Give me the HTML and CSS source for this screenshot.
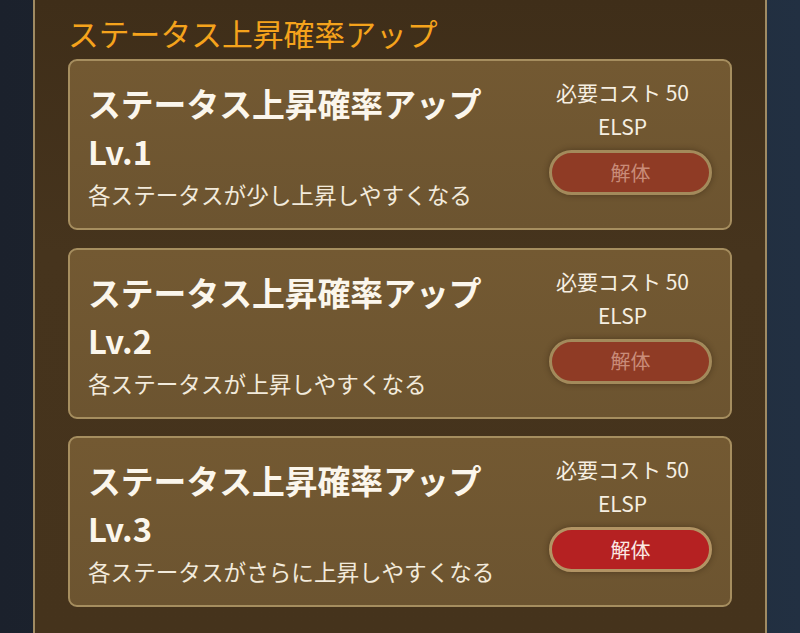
FILE: index.html
```html
<!DOCTYPE html>
<html lang="ja">
<head>
<meta charset="utf-8">
<link rel="stylesheet" href="styles.css">
</head>
<body>
<div class="screen">
  <div class="panel">
    <h2 class="section-title">ステータス上昇確率アップ</h2>
    <div class="card">
      <div class="info">
        <div class="name">ステータス上昇確率アップ Lv.1</div>
        <div class="desc">各ステータスが少し上昇しやすくなる</div>
      </div>
      <div class="side">
        <div class="cost">必要コスト 50 ELSP</div>
        <button class="btn disabled">解体</button>
      </div>
    </div>
    <div class="card">
      <div class="info">
        <div class="name">ステータス上昇確率アップ Lv.2</div>
        <div class="desc">各ステータスが上昇しやすくなる</div>
      </div>
      <div class="side">
        <div class="cost">必要コスト 50 ELSP</div>
        <button class="btn disabled">解体</button>
      </div>
    </div>
    <div class="card">
      <div class="info">
        <div class="name">ステータス上昇確率アップ Lv.3</div>
        <div class="desc">各ステータスがさらに上昇しやすくなる</div>
      </div>
      <div class="side">
        <div class="cost">必要コスト 50 ELSP</div>
        <button class="btn active">解体</button>
      </div>
    </div>
  </div>
</div>
</body>
</html>
```

FILE: styles.css
```css
html, body {
  margin: 0;
  padding: 0;
  height: 100%;
}
body {
  font-family: "Noto Sans CJK JP", "Noto Sans", sans-serif;
  background: linear-gradient(90deg, #1b212c 0%, #1f2733 50%, #223042 100%);
  overflow: hidden;
}
.screen {
  display: flex;
  justify-content: center;
  height: 100%;
}
.panel {
  width: 734px;
  box-sizing: border-box;
  height: 100%;
  border-left: 2px solid #a08b63;
  border-right: 2px solid #a08b63;
  background: linear-gradient(180deg, #3f2e19 0%, #46341d 40%, #45331c 100%);
  padding: 10px 33px 0 33px;
}
.section-title {
  margin: 0 0 4px 0;
  font-size: 30.8px;
  line-height: 45px;
  font-weight: 400;
  color: #f5a31c;
}
.card {
  display: flex;
  gap: 20px;
  border: 2px solid #a68e5f;
  border-radius: 9px;
  background: linear-gradient(180deg, #735932 0%, #6c5430 100%);
  padding: 18px 18px 16px 18px;
  margin-bottom: 17.5px;
  color: #f8f1e4;
}
.info {
  flex: 1;
  min-width: 0;
}
.name {
  font-size: 32.8px;
  line-height: 48px;
  font-weight: 700;
  color: #fbf6ec;
}
.desc {
  margin-top: 2px;
  font-size: 22.6px;
  line-height: 35px;
  color: #f2eadb;
}
.side {
  width: 163px;
  display: flex;
  flex-direction: column;
  align-items: center;
}
.cost {
  font-size: 21px;
  line-height: 34px;
  margin-top: -4px;
  text-align: center;
  width: 140px;
  margin-right: 16px;
  color: #f6efe2;
}
.btn {
  margin-top: 7px;
  width: 163px;
  height: 45px;
  border-radius: 23px;
  border: 3px solid #a38a5b;
  font-family: inherit;
  font-size: 20px;
  line-height: 1;
  box-shadow: 0 0 6px rgba(40, 25, 10, 0.45);
  padding: 0;
}
.btn.disabled {
  background: #8f3b25;
  color: #c98c79;
}
.btn.active {
  background: #b52122;
  color: #fbe9e4;
  border-color: #b29464;
}
```
